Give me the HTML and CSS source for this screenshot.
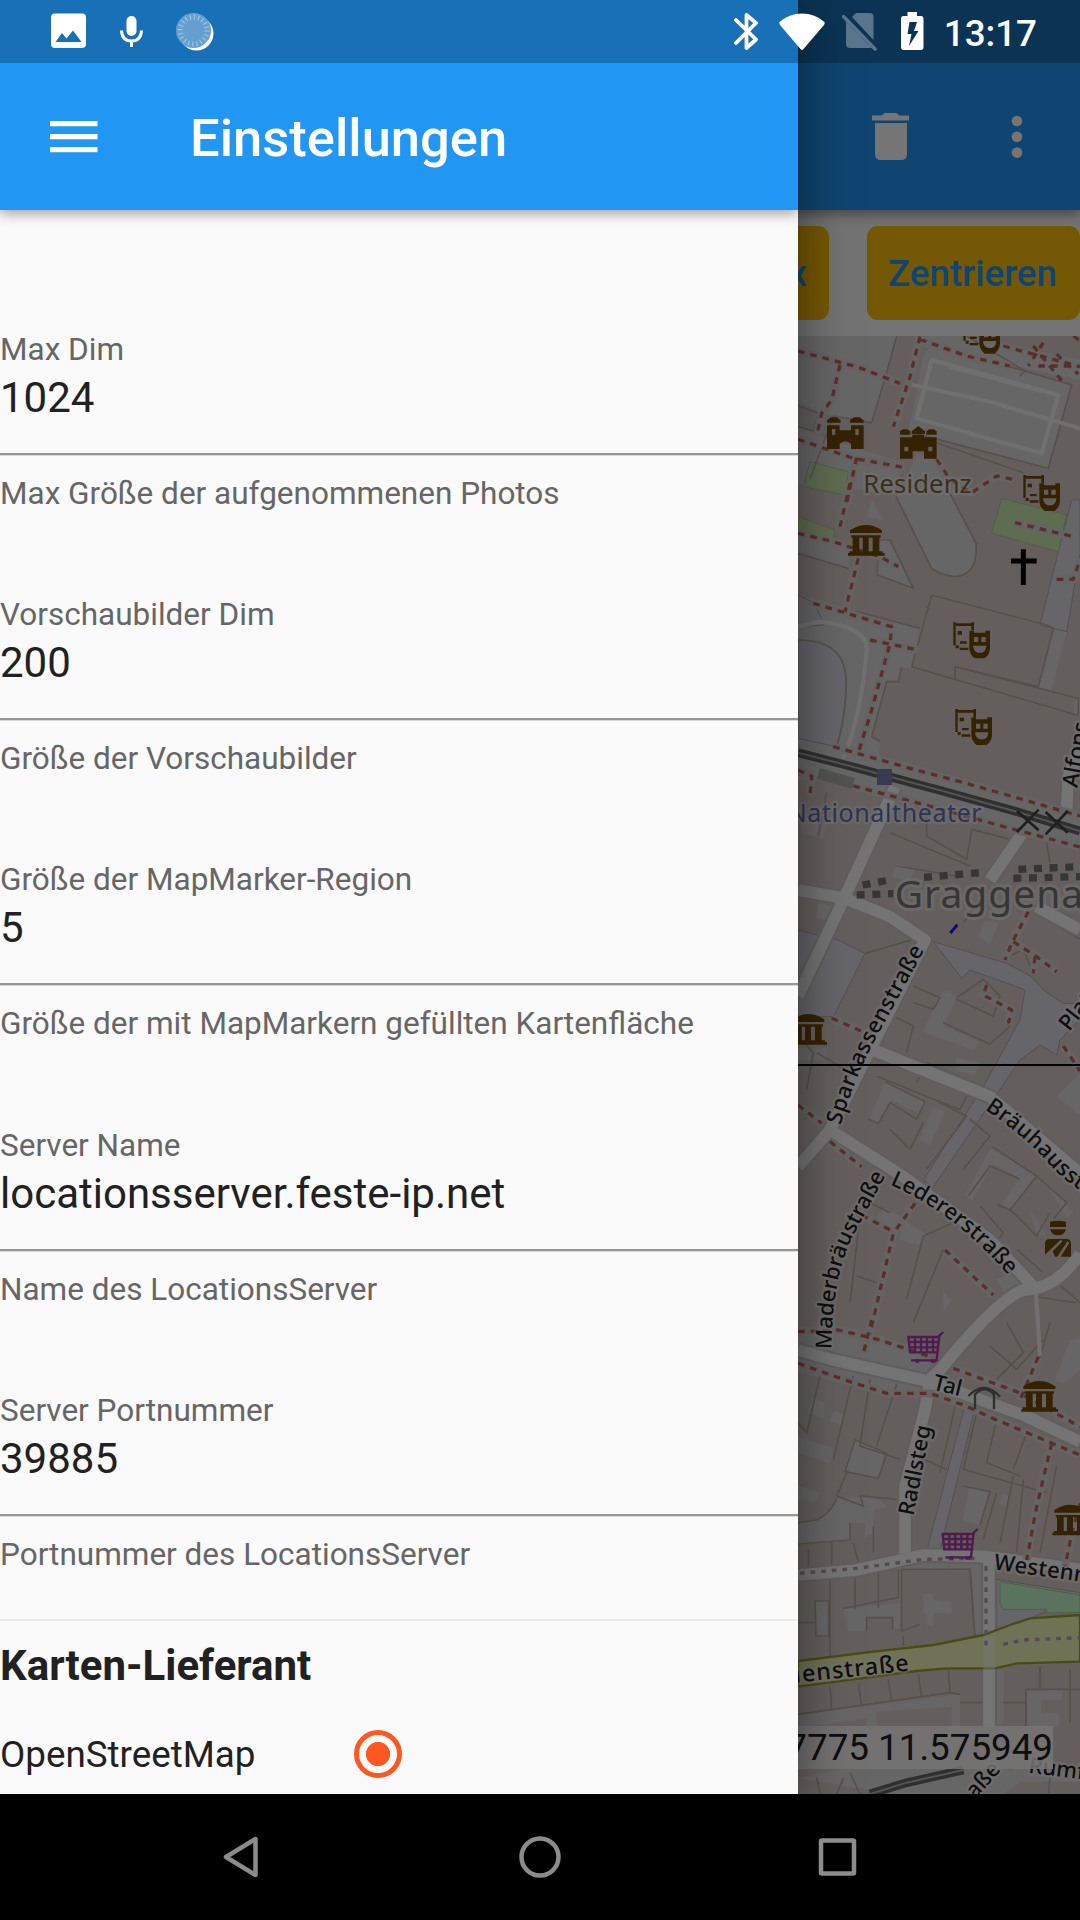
FILE: index.html
```html
<!DOCTYPE html>
<html lang="de">
<head>
<meta charset="utf-8">
<title>Einstellungen</title>
<link rel="stylesheet" href="styles.css">
</head>
<body>
<div class="screen">
  <div class="app">
    <main class="page">
      <header class="page-bar">
        <svg class="trash" width="40" height="50" viewBox="0 0 40 50"><path d="M1 3.500h9.500l3-2.500h12l3 2.500H38V8.500H1zM4 11h32v31q0 6-6 6H10q-6 0-6-6z"/></svg>
        <svg class="dots" width="12" height="44" viewBox="0 0 12 44"><circle cx="6" cy="6" r="5.300"/><circle cx="6" cy="21.800" r="5.300"/><circle cx="6" cy="37.600" r="5.300"/></svg>
      </header>
      <div class="actions"><button class="action">x</button><button class="action wide">Zentrieren</button></div>
      <div class="map-area">
        <svg class="map" viewBox="24 0 846 4374" preserveAspectRatio="none">
          <defs>
            <g id="museum"><path d="M-48-30Q0-62 48-30V-22H-48zM-44-15H44V-8H-44zM-40-8h20v42h-20zM-10-8h18v42h-18zM20-8h20v42h-20zM-50 33H50V38H56V46H-54V38h4z"/></g>
            <g id="masks"><path d="M-55-55h8v8h-8zM-47-52h46v8h-46zM-1-55h8v24h-8zM-55-48h7v62h-7zM-42-29h13v11h-13zM-48 14h9v9h-9zM-35 2h20v7h-20zM-36 21h26v7h-26z"/><path fill-rule="evenodd" d="M-7-30H7V-24H41V-30H55V22Q55 40 39 53H9Q-7 40-7 22zM7-11V4H20V-11zM29-11V4H42V-11zM4 15Q6 32 18 36H31Q43 32 44 15z"/></g>
            <g id="castle"><path fill-rule="evenodd" d="M-55-25H-17V-10H17V-25H55V46H17V30Q0 15-17 30V46H-55zM-40-14V4h10V-14zM30-14V4H40V-14zM-55-40l12-9h17l12 9v7h-41zM14-40l12-9H43l12 9v7H14z"/></g>
            <g id="palace"><path fill-rule="evenodd" d="M-55-18H-18V-26H17V-18H55V46H17V24H-17V46H-55zM-42 10V24h12V10zM30 10V24H42V10zM-55-36l9-6h13l9 6v10h-31zM24-36l9-6h13l9 6v10H24zM-20-36L0-52 20-36V-28H-20z"/></g>
            <g id="cart" fill="none" stroke-width="7"><path d="M55-45L43-34L35 40H-42M-50-30H43L37 16H-45zM-48-15H40M-46 1H38M-30-30V15M-12-30V15M6-30V15M24-30V15"/><path d="M-28 42h10M18 42h14" stroke-width="11"/></g>
          </defs>

          <g class="land">
            <g transform="translate(0 -408)"><path d="M24 408H320L290 515 245 668 130 650 24 608zM400 470L425 430 845 555 775 805 355 700zM400 408H530L870 480V540L400 440zM24 680L105 715 345 790 310 880 24 850z M380 760L440 780 500 890H330z"/></g>
            <g transform="translate(0 432)"><path d="M24 150L180 190 175 265 24 220zM318 40H480L558 190Q565 290 490 290Q440 280 425 265zM245 60l35 60-50-10zM265 180H300L370 325 262 285zM24 345L390 445 365 565 335 562 325 605 290 605 245 770 270 785 265 840 480 900H24zM790 450l40 5-45 175-40-10zM855 660h15v45l-20-5z"/></g>
            <g transform="translate(0 1272)"><path d="M24-60L480 60 870 165V245L680 215 300 110 24 30zM30 170L110 190 100 235 35 220zM85 430L140 440 120 485 80 470zM320 310L375 330 360 360 305 350zM585 480L625 490 600 550 565 530zM470 690L500 710 460 800 570 845 550 870 400 815 440 720zM24 865H110V900H24zM500 895l70 15-15 35-60-15z"/></g>
            <g transform="translate(0 2112)"><path d="M285 125L405 185 385 220 305 180 265 250 240 235zM430 200L465 215 420 315 388 300zM605 320L740 410 660 510 635 490 690 415 610 370 545 480 525 465zM340 540L405 580 395 615 328 600zM870 100V225L800 170zM780 435L850 520 830 530 780 450zM720 510L770 590 740 580zM460 760L485 780 460 815zM620 720L680 690 735 745 650 770zM285 505L335 530 310 570 260 530z"/></g>
            <g transform="translate(0 2952)"><path d="M24 20L230 50 420 110V230L290 225 24 155zM70 235l35 10-5 48-48-13zM130 275l32 8-8 32-32-10zM195 360L290 400 265 475 165 455zM24 350L130 385 120 430 24 400zM24 497L90 520 75 545 24 540zM140 535L250 528 293 560 250 570V640L225 655V608H180V660L24 672V600H80Q125 580 140 535zM540 495L600 515 570 615 518 600zM640 520l15 10-10 30-18-8zM840 60L870 55V150L820 190 795 180zM340 720L600 725V890H570L545 755 340 750z"/></g>
            <g transform="translate(0 3672)"><path d="M78 122h38v107H78zM160 148L330 130V205H308V172H230V212H175zM400 103H430V120L485 125V160H430V195H410V160H400zM545 35h33v190h-20zM24 465L510 402V500H485V440L260 455V500H230V475L24 505zM708 390h110v30h-65v40h55v40H708zM24 655L170 625H620L700 640 600 702H270L240 690zM640 650L680 620 870 640V665H690L640 702H600zM615 330H640V490H615z"/></g>
          </g>
          <g class="plaza">
            <path d="M845 492H870V652L830 887 750 867 805 647zM24 777L75 802 100 867 24 872zM24 912Q165 912 168 1032Q170 1132 140 1232L24 1207z"/>
            <path d="M24 1782L145 1812 225 1852 130 2042 24 2042zM430 1817L650 1882 725 1922 760 1962 820 2002H870V2050L810 2112 800 2157 750 2127 690 2172 430 2552 400 2532 580 2252 690 2052 705 1962 680 1952 540 1902 515 1927z"/>
            <path d="M525 3207L555 3217 450 3642 412 3637zM620 3730L870 3770V3825H770L680 3865 620 3885z"/>
          </g>
          <g class="park"><path d="M60 377L175 407 165 477 40 452zM24 542L135 582 130 612 24 582zM635 487L830 537 805 647 605 592z"/><path class="garden" d="M630 3737L870 3777V3830H770V3820H640L630 3805z"/></g>

          <g class="outline">
            <path d="M320 0L290 110 245 260 130 240M0 200L85 232 70 285 24 272M425 22L845 147 775 397 365 290M530 0L705 105 690 120M130 240L60 430M440 320L700 410"/>
            <path d="M425 777L770 867 790 877 745 1052 495 992V1032M425 777L365 992 860 1137M495 992L865 1087V1137M318 482L425 697M480 472L558 622Q565 722 490 722Q440 712 425 697M24 652L175 697M195 825L390 877M335 994L325 1037 290 1037 245 1202 270 1217M24 912Q165 912 168 1032Q170 1132 140 1232M265 612H300L370 757 262 717z"/>
            <path d="M24 1315L65 1325M110 1370L85 1500M300 1490L540 1590M410 1420V1500L530 1570 545 1480 660 1510M770 1520L780 1580M70 1660L145 1700M320 1590L500 1620M520 1760L580 1680M720 1700L820 1780 870 1810M640 1870L700 1840 725 1900M370 1950L450 1985 430 2020 370 2000M500 1985L580 1930 630 1980 610 2040 500 1990M460 2060L600 2125 660 2070M290 2030L370 2070 350 2150M225 1852L370 1810M24 2100L70 2150 50 2260M80 2150L165 2200"/>
            <path d="M285 2237L405 2297 380 2350 300 2300 265 2362 235 2350M260 2220L430 2290M380 2240L410 2180 550 2240 510 2320 430 2290M450 2300L530 2340 410 2500M300 2380L360 2440 400 2360M540 2350L600 2400 520 2500M605 2432L740 2520 660 2622 620 2605M690 2530L600 2490 535 2580M740 2520L830 2600 790 2650M760 2390L870 2490M570 2610L640 2690 600 2740M660 2620L740 2700 780 2630M680 2740L760 2810M490 2660L400 2700 350 2890M600 2720L700 2820M460 2740L370 2960M210 2640L180 2900M300 2630L240 2600M200 2820L260 2840M720 2880L860 2900M790 2830L870 2900"/>
            <path d="M90 3120L50 3290 24 3260M190 3120L130 3370M240 3130L210 3330 330 3370M320 3145L260 3330M195 3312L290 3352 265 3427 165 3407zM430 3170L380 3360 470 3400M500 3190L450 3410M170 3410L140 3480 220 3510 210 3480 320 3490M620 3250L590 3380 690 3420M710 3290L670 3400M560 3230L520 3400 770 3470M620 3470L580 3610M670 3420L630 3620M700 3430L680 3650M800 3390L750 3650M520 3450L600 3467 570 3567M24 3560L80 3552Q125 3530 140 3487M180 3560V3612L24 3624M55 3640V3700M125 3620V3710M190 3620L210 3700M250 3570V3650M600 3030L680 3100 760 3010M650 2960L700 3050 620 3130M780 2960L740 3100"/>
            <path d="M120 3720V3960M195 3720V3820M265 3710V3815M325 3700V3785L160 3817M335 3700H540L555 3910M335 3700V3885L390 3865M340 3900V3930M24 3860H78M75 3795H116V3900H78zM230 3885V3845H308V3880M120 4050L125 4120M205 4042L215 4110M295 4030L305 4095M385 4015L395 4085M475 4000L480 4070 510 4075M575 4000V4170M24 4135L480 4070M510 4100H575M750 3990V4060M640 4100H708M840 4000V4160M708 4060H870M708 4062V4170M160 4327L140 4374M80 4325L90 4374M180 4310L210 4374M780 4325L775 4374"/>
          </g>

          <g class="road case"><path id="r1" d="M315 1352L215 1572 160 1692 24 1980M24 1662L165 1687 300 1742 405 1812 240 2142 120 2382 24 2492M700 1487L600 1632M740 1712L870 1782M870 1240L835 1320 830 1420M250 2142L400 2202 600 2282 870 2512M120 2382L340 2522 600 2712 735 2857M870 2752Q800 2860 700 2862Q620 2892 450 3102L420 3130 405 3222 345 3452V3652M24 3042L130 3072 420 3137 700 3237 870 3317M24 3717L200 3702 400 3657 590 3662 870 3700M597 3672V4172"/></g>
          <g class="road"><use href="#r1"/></g>
          <g class="lane"><path d="M24 872L90 857Q235 872 230 942Q215 1132 160 1267M425 72L805 177 755 352 380 247zM345 142L600 197 700 227 870 277M480 92L760 167M738 2872L750 3060"/></g>
          <path class="main" d="M24 3975L250 3947 430 3927 580 3897 660 3867 720 3847 870 3837V3977L680 3982 615 3997H470L380 4005 24 4052z"/>
          <path class="mainmix" d="M580 3900H615V4172H580z"/>

          <g class="rail">
            <path class="siding" d="M85 1312L190 1342"/>
            <path d="M24 1250L160 1285 450 1363 690 1430 870 1485" class="tram"/><path d="M24 1250L160 1285 450 1363 690 1430 870 1485" class="gap"/>
            <path d="M240 4374L350 4340 520 4302" class="tram"/><path d="M240 4374L350 4340 520 4302" class="gap"/>
          </g>
          <g class="stairs"><path d="M218 1647L300 1632M402 1624L570 1610M685 1600L870 1592M200 1677L310 1673M670 1627L870 1622"/></g>

          <g class="path-bg"><path id="foot" d="M24 45L200 92 330 142M150 87L125 192 95 232 80 300M390 2L360 122 310 272M390 10L530 60 660 90M640 30L870 92M24 310L190 367 345 395M200 365L170 500M440 370L480 430 545 470 620 420 670 430M180 442L150 572M24 592L130 617 270 662 325 692M205 667L165 827M70 802L305 872 300 922 245 1122 205 1250M240 912L385 942M130 1232L360 1297 540 1345 870 1440M24 1302L65 1320 60 1380M190 1350L380 1400 660 1477 870 1533M715 1727L665 1822 645 1872M670 1817L740 1862 800 1907M735 1862L730 1912M590 1947L580 1977 665 2022 655 2062M125 2047L230 2092M820 2130L870 2205M24 2307L95 2362M120 2417L215 2492M375 2602L310 2692 275 2842 240 2992M215 2637L310 2687M465 2742L610 2877M24 2987L145 2982 270 3012 420 3062M245 2952L220 3052M24 3082L180 3137 290 3172 420 3172 520 3207 620 3252 870 3357M490 3097L680 3167 870 3272M745 3062L690 3192M785 3322L740 3512 710 3672M870 3502L845 3592 825 3692M675 560L850 602M800 730H850L870 670"/></g>
          <g class="path"><use href="#foot"/><path d="M730 30l90 110M760 20l-45 70M800 55l65 60M745 90h95M850 0l20 15"/></g>
          <g class="cycle"><path d="M30 3712L200 3697 400 3670 560 3667M588 3690V3930M640 3925L700 3912 870 3905"/></g>

          <g class="poi">
            <use href="#castle" x="166" y="293"/><use href="#palace" x="385" y="322"/>
            <use href="#masks" x="575" y="0"/><use href="#masks" x="755" y="472"/><use href="#masks" x="545" y="914"/><use href="#masks" x="551" y="1174"/>
            <use href="#museum" x="228" y="613"/><use href="#museum" x="55" y="2080"/><use href="#museum" x="748" y="3181"/><use href="#museum" x="841" y="3552"/>
            <path d="M780 2657q24-5 48 0v16h-48zM780 2680h48q-5 18-24 18t-24-18zM765 2722q0-13 15-13h48q15 0 15 13v40H812L838 2720 832 2716 802 2762H795L788 2746 818 2716 812 2711 765 2756z"/>
          </g>
          <g class="shop"><use href="#cart" x="405" y="3033"/><use href="#cart" x="508" y="3624"/></g>
          <path class="cross" d="M700 640V747M663 675H740"/>
          <path class="xing" d="M681 1425L746 1483M746 1421L681 1488M767 1428L833 1490M833 1425L767 1495"/>
          <path class="gate" d="M555 3220V3175Q583 3145 612 3175V3220M535 3180Q583 3130 630 3182"/>
          <path class="station" d="M261 1299h45v48h-45z"/>
          <path class="location" d="M481 1791L502 1766"/>

          <g class="label">
            <path id="sparkassen" d="M152 2368Q185 2250 245 2130L404 1840" fill="none" stroke="none"/>
            <path id="brauhaus" d="M584 2320Q706 2402 776 2482T960 2612" fill="none" stroke="none"/>
            <path id="lederer" d="M299 2546Q496 2632 652 2814" fill="none" stroke="none"/>
            <path id="maderbrau" d="M124 3040Q127 2820 190 2698L290 2512" fill="none" stroke="none"/>
            <text class="residenz" x="220" y="470" textLength="325">Residenz</text>
            <text class="transit" x="575" y="1457" text-anchor="end" textLength="582">Nationaltheater</text>
            <text class="district" x="314" y="1715">Graggenau</text>
            <text><textPath href="#sparkassen" textLength="585">Sparkassenstraße</textPath></text>
            <text letter-spacing="1.500"><textPath href="#brauhaus">Bräuhausstra</textPath></text>
            <text><textPath href="#lederer" textLength="452">Ledererstraße</textPath></text>
            <text><textPath href="#maderbrau" textLength="555">Maderbräustraße</textPath></text>
            <text transform="translate(862 1357) rotate(-80)">Alfons</text>
            <text transform="translate(838 2088) rotate(-52)">Platzl</text>
            <text transform="translate(426 3160) rotate(14)" textLength="86">Tal</text>
            <text transform="translate(370 3541) rotate(-79)" textLength="274">Radlsteg</text>
            <text transform="translate(610 3700) rotate(8)" letter-spacing="1">Westenrieder</text>
            <text class="major" transform="translate(358 4004) rotate(-6)" text-anchor="end" textLength="484">Frauenstraße</text>
            <text transform="translate(555 4390) rotate(-48)">aße</text>
            <text transform="translate(714 4310) rotate(7)">Rumf</text>
          </g>
          <path class="hairline" d="M24 2187H870"/>
        </svg>
        <div class="coords">7775 11.575949</div>
      </div>
    </main>
    <div class="scrim"></div>
    <aside class="drawer">
      <header class="drawer-bar">
        <svg width="48" height="34" viewBox="0 0 48 34"><path d="M0 1h47.500v5.200H0zM0 14h47.500v5.200H0zM0 27h47.500v5.200H0z"/></svg>
        <h1>Einstellungen</h1>
      </header>
      <section class="fields">
        <div class="field"><label>Max Dim</label><div class="value">1024</div><p>Max Größe der aufgenommenen Photos</p></div>
        <div class="field"><label>Vorschaubilder Dim</label><div class="value">200</div><p>Größe der Vorschaubilder</p></div>
        <div class="field"><label>Größe der MapMarker-Region</label><div class="value">5</div><p>Größe der mit MapMarkern gefüllten Kartenfläche</p></div>
        <div class="field"><label>Server Name</label><div class="value">locationsserver.feste-ip.net</div><p>Name des LocationsServer</p></div>
        <div class="field"><label>Server Portnummer</label><div class="value">39885</div><p>Portnummer des LocationsServer</p></div>
      </section>
      <section class="provider">
        <h2>Karten-Lieferant</h2>
        <div class="option"><span>OpenStreetMap</span><i class="radio"></i></div>
      </section>
    </aside>
    <div class="status">
      <svg class="s-img" width="36" height="37" viewBox="0 0 36 37"><path fill-rule="evenodd" d="M4 .5H31Q35 .5 35 4.500V31Q35 35 31 35H4Q0 35 0 31V4.500Q0 .5 4 .5zM4.500 29H30.500L22 17.500 15.500 25.500 11 20z"/></svg>
      <svg class="s-mic" width="24" height="34" viewBox="0 0 24 34"><rect x="6.500" y="1" width="10" height="20" rx="5"/><path d="M1.500 15.500Q2 26 11.500 26T21.500 15.500M11.500 26V32" fill="none" stroke="#fff" stroke-width="3"/></svg>
      <svg class="s-sync" width="38" height="40" viewBox="0 0 38 40"><circle cx="20.500" cy="21.500" r="17"/><circle cx="17.500" cy="18.500" r="17.500" fill="#659fd0"/><circle cx="17.500" cy="18.500" r="13.500" fill="none" stroke="#9fc3e2" stroke-width="5" stroke-dasharray="1.200 3.040"/></svg>
      <span class="spacer"></span>
      <svg class="s-bt" width="24" height="39" viewBox="0 0 24 39"><path d="M2 8L22 27.500 12.500 36V3L22 11 2 31" fill="none" stroke="#fff" stroke-width="3.800" stroke-linejoin="round" stroke-linecap="round"/></svg>
      <svg class="s-wifi" width="46" height="38" viewBox="0 0 46 38"><path d="M.5 9Q10 .5 23 .5T45.500 9Q46 11 45 12L24.500 36Q23 38 21.500 36L1 12Q0 10 .5 9z"/></svg>
      <svg class="s-sim" width="35" height="39" viewBox="0 0 35 39" opacity=".32"><path d="M10 5L14 1H28Q31.500 1 31.500 5V28zM4 9.500L29.500 36H8Q4 36 4 32z"/><path d="M1.500 4.500L33 37" stroke="#fff" stroke-width="3.500" stroke-linecap="round"/></svg>
      <svg class="s-bat" width="23" height="39" viewBox="0 0 23 39"><path fill-rule="evenodd" d="M6.500 0H16V4H20Q22.500 4 22.500 7V35Q22.500 38 20 38H2.500Q0 38 0 35V7Q0 4 2.500 4H6.500zM8.500 10L6.500 22H10.500L8 34 17.500 19H13L16 10z"/></svg>
      <time>13:17</time>
    </div>
  </div>
  <nav class="nav">
    <svg viewBox="0 0 48 48"><path d="M36.500 6V42L7 24z"/></svg>
    <svg viewBox="0 0 48 48"><circle cx="24" cy="24" r="18.500"/></svg>
    <svg viewBox="0 0 48 48"><rect x="8" y="7.500" width="33" height="33" rx="1"/></svg>
  </nav>
</div>
</body>
</html>
```
FILE: styles.css
```css
* { box-sizing: border-box; }
body, h1, h2, p { margin: 0; }
body { font-family: Roboto, sans-serif; background: #000; }
svg { display: block; flex: none; }
.screen { width: 1080px; height: 1920px; display: flex; flex-direction: column; overflow: hidden; }
.app { position: relative; height: 1794px; overflow: hidden; }
.page { height: 100%; display: flex; flex-direction: column; background: #fafafa; isolation: isolate; }
.page-bar { height: 210px; flex: none; padding: 63px 57px 0 0; display: flex; align-items: center; justify-content: flex-end; gap: 100px; background: #2196f3; box-shadow: 0 4px 12px rgba(0,0,0,.4); z-index: 1; }
.page-bar svg { fill: #fff; }
.actions { height: 126px; flex: none; display: flex; justify-content: flex-end; align-items: center; gap: 38px; }
.action { height: 94px; border: 0; border-radius: 11px; padding: 0 22px; background: #ffc107; color: #2196f3; font: 500 36.75px Roboto, sans-serif; }
.wide { width: 213px; padding: 0 2px 0 0; }
.map-area { position: relative; flex: 1; display: flex; justify-content: flex-end; overflow: hidden; background: #d9d0c9; }
.map { width: 282px; height: 1458px; background: #d9d0c9; }
.coords { position: absolute; right: 27px; bottom: 25px; height: 43px; line-height: 43px; font-size: 36.75px; white-space: nowrap; color: #212121; background: rgba(255,255,255,.85); }
.land { fill: #e0dfdf; }
.plaza { fill: #dddde8; stroke: #b0adb2; stroke-width: 3; }
.park { fill: #cdebb0; stroke: #b3cc9b; stroke-width: 3; }
.garden { fill: #c3fac8; }
.outline { fill: none; stroke: #bbaea1; stroke-width: 5; }
.road, .lane, .path-bg, .path, .cycle, .rail, .stairs { fill: none; stroke-linejoin: round; }
.road { stroke: #fcfcfc; stroke-width: 35; }
.case { stroke: #cfcdca; stroke-width: 48; }
.lane { stroke: #f4f4f4; stroke-width: 12; }
.main { fill: #f2f8ba; stroke: #9fa32f; stroke-width: 7; }
.mainmix { fill: #fff; opacity: .5; }
.tram { stroke: #666; stroke-width: 26; }
.siding { stroke: #b4b2b1; stroke-width: 34; }
.gap { stroke: #b5b5b5; stroke-width: 6; }
.stairs { stroke: #777; stroke-width: 22; stroke-dasharray: 24 23; }
.path-bg { stroke: #dcdad8; stroke-width: 24; }
.path { stroke: #c4665d; stroke-width: 10; stroke-dasharray: 20 18; }
.cycle { stroke: #b9a0b2; stroke-width: 10; stroke-dasharray: 14 18; }
.poi { fill: #734a08; }
.shop { stroke: #ac39ac; fill: none; }
.cross { stroke: #000; stroke-width: 15; }
.xing { stroke: #444; stroke-width: 8; }
.gate { fill: none; stroke: #666; stroke-width: 7; }
.station { fill: #7d7db5; }
.location { stroke: #00f; stroke-width: 9; opacity: .85; }
.hairline { stroke: #000; stroke-width: 6; }
.label { font-family: "Noto Sans", sans-serif; font-size: 66px; font-weight: 500; fill: #222; stroke: rgba(255,255,255,.45); stroke-width: 14; stroke-linejoin: round; paint-order: stroke; }
.major { font-size: 70px; }
.residenz { font-size: 77px; font-weight: 400; fill: #85673a; }
.transit { font-size: 75px; font-weight: 400; fill: #6270bd; }
.district { font-size: 117px; font-weight: 400; letter-spacing: 3px; fill: #777; stroke-width: 18; }
.scrim { position: absolute; inset: 0; background: rgba(0,0,0,.54); }
.drawer { position: absolute; left: 0; top: 0; width: 798px; height: 1794px; background: #fafafa; box-shadow: 0 10px 48px rgba(0,0,0,.5); }
.drawer-bar { height: 210px; padding: 63px 0 0 50px; display: flex; align-items: center; gap: 92px; background: #2196f3; fill: #fff; box-shadow: 0 4px 12px rgba(0,0,0,.35); clip-path: inset(0 0 -24px 0); }
.drawer-bar h1 { font-size: 52.5px; font-weight: 500; line-height: 62px; color: #fff; padding-top: 2px; }
.fields { padding-top: 121px; height: 1411px; display: flex; flex-direction: column; gap: 84.2px; border-bottom: 2px solid #ebebeb; }
.field { height: 181px; flex: none; }
.field label, .field p { display: block; height: 37px; line-height: 37px; font-size: 31.5px; color: #666; white-space: nowrap; }
.value { margin-top: 5px; height: 82px; line-height: 49px; font-size: 42px; color: #212121; border-bottom: 2px solid #959595; box-shadow: 0 1px 0 #d8d8d8; }
.field p { margin-top: 20px; }
.provider { padding-top: 20px; color: #212121; }
.provider h2 { font-size: 42px; font-weight: 700; line-height: 49px; }
.option { display: flex; align-items: center; margin-top: 40px; height: 48px; font-size: 36.75px; }
.option span { width: 354px; }
.radio { width: 48px; height: 48px; border-radius: 50%; border: 5.3px solid #ff5722; background: radial-gradient(circle, #ff5722 11.7px, transparent 12.4px); }
.status { position: absolute; inset: 0 0 auto; height: 65px; height: 63px; display: flex; align-items: center; padding: 0 43px 0 51px; fill: #fff; background: rgba(0,0,0,.25); }
.s-mic { margin-left: 33px; }
.s-sync { margin-left: 32px; }
.spacer { flex: 1; }
.s-wifi { margin-left: 21px; }
.s-sim { margin-left: 17px; }
.s-bat { margin-left: 24px; }
.status time { margin-left: 20px; color: #fff; font-size: 36.75px; font-weight: 500; line-height: 43px; padding-top: 3px; }
.nav { height: 126px; display: flex; justify-content: center; align-items: center; gap: 249px; background: #000; }
.nav svg { width: 48px; height: 48px; fill: none; stroke: #8c8c8c; stroke-width: 4.5; stroke-linejoin: round; }
```
